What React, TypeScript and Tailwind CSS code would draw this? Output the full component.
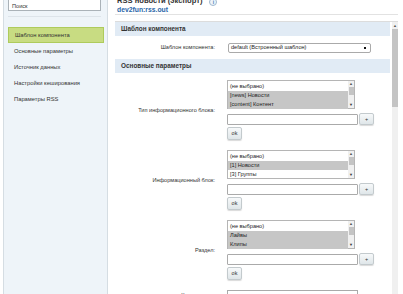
import React from "react";

const menu = [
  "Основные параметры",
  "Источник данных",
  "Настройки кеширования",
  "Параметры RSS",
];

const ListScroll = () => (
  <div className="absolute right-0 top-0 bottom-0 w-[6px] bg-[#f0f0f0] flex flex-col items-center">
    <span className="text-[4px] leading-[6px] text-[#555]">▲</span>
    <div className="w-[5px] h-[8px] bg-[#c4c4c4]" />
    <div className="flex-1" />
    <span className="text-[4px] leading-[6px] text-[#333]">▼</span>
  </div>
);

const SmallBtn = ({ label, className }: { label: string; className?: string }) => (
  <div
    className={
      "flex items-center justify-center rounded-[2px] border border-[#c3cacd] bg-gradient-to-b from-[#f7f9fa] to-[#dfe6e9] text-[5.5px] text-[#333] shadow-[0_1px_1px_rgba(0,0,0,0.15)] " +
      (className ?? "")
    }
  >
    {label}
  </div>
);

interface Opt {
  text: string;
  selected?: boolean;
}

const MultiRow = ({ label, options }: { label: string; options: Opt[] }) => (
  <div className="flex items-center">
    <div className="w-[101px] text-right text-[5.6px] text-[#333] pr-[1px]">{label}</div>
    <div className="ml-[11px] flex flex-col">
      <div className="relative w-[128px] h-[29px] border border-[#b5b5b5] bg-white pt-[1px] pr-[6px]">
        {options.map((o) => (
          <div
            key={o.text}
            className={
              "h-[9px] leading-[9px] pl-[2px] text-[5.6px] text-[#222] " +
              (o.selected ? "bg-[#c6c6c6]" : "")
            }
          >
            {o.text}
          </div>
        ))}
        <ListScroll />
      </div>
      <div className="mt-[4px] flex items-center">
        <div className="w-[131px] h-[11px] border border-[#aaa] rounded-[1px] bg-white" />
        <SmallBtn label="+" className="ml-[1px] w-[15px] h-[12px]" />
      </div>
      <SmallBtn label="ok" className="mt-[2px] w-[15px] h-[13px]" />
    </div>
  </div>
);

const SectionHead = ({ title }: { title: string }) => (
  <div className="h-[14px] bg-[#e1ebf5] pl-[6px] text-[6.4px] font-bold leading-[14px] text-[#333]">
    {title}
  </div>
);

export default function App() {
  return (
    <div className="w-[403px] h-[294px] overflow-hidden bg-white flex font-['Liberation_Sans',Arial,sans-serif]">
      <aside className="ml-[3px] w-[105px] shrink-0 border-x border-[#d5dde3] bg-[#eef4f9] pl-[4px] pr-[3px]">
        <div className="-mt-[6px] mr-[3px] h-[17px] border border-[#aab2b8] bg-white pl-[3px] pt-[7px] text-[5.6px] leading-[8px] text-[#333]">
          Поиск
        </div>
        <div className="mt-[5px] mr-[3px] border-t border-[#dde4ea]" />
        <div className="mt-[10px] h-[16px] border border-[#aecb5c] bg-[#c8dc82] pl-[6px] text-[5.8px] leading-[14px] text-[#333]">
          Шаблон компонента
        </div>
        {menu.map((m) => (
          <div key={m} className="h-[16px] pl-[6px] text-[5.8px] leading-[16px] text-[#333]">
            {m}
          </div>
        ))}
      </aside>

      <main className="ml-[7px] flex-1 flex flex-col">
        <div className="h-[18px] mr-[5px] border-b border-[#e2e2e2]">
          <div className="-mt-[5px] flex items-center gap-[7px] text-[7.6px] font-bold leading-[11px] text-[#333]">
            <span className="pl-[2px]">RSS новости (экспорт)</span>
            <span className="mt-[3px] flex h-[8px] w-[8px] items-center justify-center rounded-full border border-[#9fb8cf] bg-[#eef4fa] text-[5px] font-bold leading-none text-[#4a7fb0]">
              i
            </span>
          </div>
          <div className="pl-[2px] text-[6.8px] font-bold leading-[8px] text-[#2a66a8]">dev2fun:rss.out</div>
        </div>

        <div className="mt-[6px] flex flex-1 border-t border-[#dcdcdc] mr-[5px]">
          <div className="flex-1 flex flex-col">
            <SectionHead title="Шаблон компонента" />
            <div className="h-[23px] flex items-center">
              <div className="w-[101px] text-right text-[5.6px] text-[#333] pr-[1px]">Шаблон компонента:</div>
              <div className="ml-[12px] flex h-[10px] w-[143px] items-center justify-between rounded-[2px] border border-[#aaa] bg-white pl-[2px] pr-[4px] text-[5.6px] text-[#222]">
                default (Встроенный шаблон)
                <span className="h-[2px] w-[2px] bg-[#111]" />
              </div>
            </div>
            <SectionHead title="Основные параметры" />
            <div className="flex flex-col gap-[10px] pt-[7px]">
              <MultiRow
                label="Тип информационного блока:"
                options={[
                  { text: "(не выбрано)" },
                  { text: "[news] Новости", selected: true },
                  { text: "[content] Контент", selected: true },
                ]}
              />
              <MultiRow
                label="Информационный блок:"
                options={[
                  { text: "(не выбрано)" },
                  { text: "[1] Новости", selected: true },
                  { text: "[3] Группы" },
                ]}
              />
              <MultiRow
                label="Раздел:"
                options={[
                  { text: "(не выбрано)" },
                  { text: "Лайвы", selected: true },
                  { text: "Клипы", selected: true },
                ]}
              />
              <div className="flex items-center">
                <div className="w-[101px] text-right text-[5.6px] text-[#333] pr-[1px]">Код раздела:</div>
                <div className="ml-[11px] w-[131px] h-[11px] border border-[#aaa] bg-white" />
              </div>
            </div>
          </div>
          <div className="w-[6px] ml-[2px] bg-[#f0f0f0] flex flex-col items-center">
            <span className="text-[4px] leading-[7px] text-[#555]">▲</span>
            <div className="w-[6px] h-[78px] bg-[#c4c4c4]" />
            <div className="flex-1" />
            <span className="text-[4px] leading-[6px] text-[#333]">▼</span>
          </div>
        </div>
      </main>
    </div>
  );
}
